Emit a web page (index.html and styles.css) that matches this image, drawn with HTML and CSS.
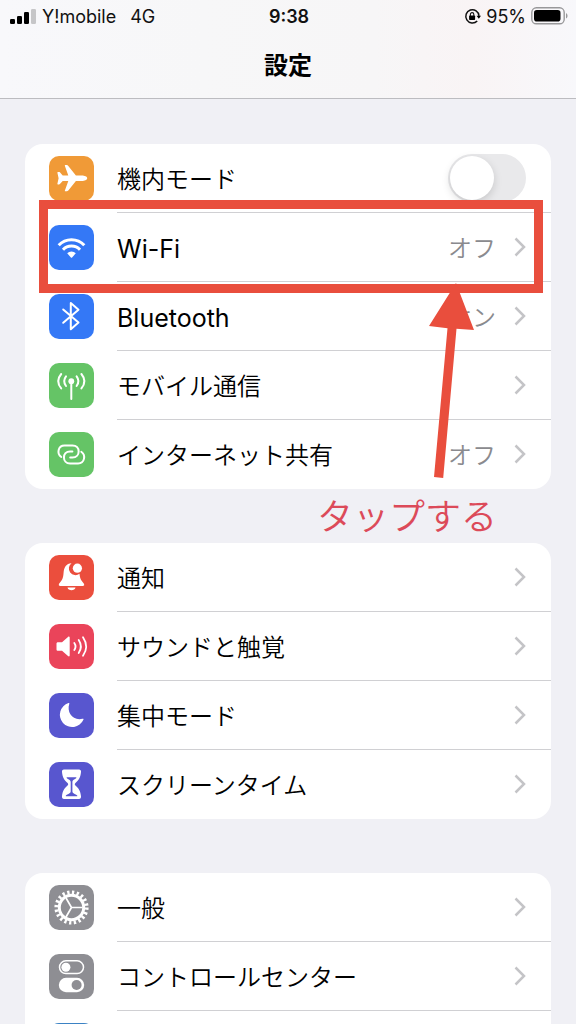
FILE: index.html
```html
<!DOCTYPE html>
<html lang="ja">
<head>
<meta charset="utf-8">
<meta name="viewport" content="width=device-width, initial-scale=1">
<title>設定</title>
<link rel="stylesheet" href="styles.css">
</head>
<body>
<div class="screen">
  <header class="header">
    <div class="status">
      <div class="status-left">
        <svg class="signal" viewBox="0 0 26 17" aria-hidden="true">
          <rect x="0" y="11" width="5" height="5" rx="1.3"/>
          <rect x="7" y="8" width="5" height="8" rx="1.3"/>
          <rect x="14" y="4" width="5" height="12" rx="1.3"/>
          <rect x="21" y="1" width="5" height="15" rx="1.3" fill="#c6c6c8"/>
        </svg>
        <span>Y!mobile</span>
        <span class="network">4G</span>
      </div>
      <time class="clock">9:38</time>
      <div class="status-right">
        <svg class="lock" viewBox="0 0 17 17" aria-hidden="true">
          <path d="M13.2 12.9a6.600 6.600 0 1 1 1.800-5" fill="none" stroke="#111" stroke-width="1.5"/>
          <path d="M12.600 7.800h4.400l-2.200 3z"/>
          <rect x="5.100" y="7.600" width="6" height="4.300" rx=".7"/>
          <path d="M6.400 8V6.300a1.700 1.700 0 0 1 3.400 0V8" fill="none" stroke="#111" stroke-width="1.1"/>
        </svg>
        <span>95%</span>
        <svg class="battery" viewBox="0 0 37 18" aria-hidden="true">
          <rect x=".8" y=".8" width="32.4" height="16" rx="4.6" fill="none" stroke="#98989a" stroke-width="1.4"/>
          <rect x="3" y="3" width="26.5" height="11.6" rx="2.8"/>
          <path d="M35 6.200c2 .6 2 4.600 0 5.200z" fill="#98989a"/>
        </svg>
      </div>
    </div>
    <h1 class="title">設定</h1>
  </header>

  <main class="groups">
    <section class="group">
      <div class="rows">
        <label class="row">
          <svg class="icon orange" viewBox="0 0 45 45" aria-hidden="true">
            <path fill="#fff" d="M38.200 22.200c0 1.700-2.700 2.700-5.300 2.700h-6L19.300 34.500c-.5.600-.9.800-1.500.8h-1.400c-.5 0-.7-.4-.5-.9l3.400-9.500h-5.600l-2.800 3.200c-.3.300-.5.400-.9.400h-1c-.5 0-.7-.3-.6-.8l1.200-5.500-1.200-5.500c-.1-.5.100-.8.600-.8h1c.4 0 .6.100.9.400l2.800 3.200h5.600l-3.400-9.500c-.2-.5 0-.9.500-.9h1.400c.6 0 1 .2 1.500.8l7.600 9.600h6c2.600 0 5.300 1 5.300 2.700z"/>
          </svg>
          <span class="body"><span class="label">機内モード</span><input class="switch" type="checkbox" role="switch"></span>
        </label>
        <a class="row" href="#wifi">
          <svg class="icon blue" viewBox="0 0 45 45" aria-hidden="true">
            <g fill="none" stroke="#fff" stroke-width="3"><path d="M9.700 20.300a17.500 17.500 0 0 1 25.600 0"/><path d="M14 24.700a11.600 11.600 0 0 1 17 0"/></g>
            <path fill="#fff" d="M18.200 28.300a5.800 5.800 0 0 1 8.600 0l-3.700 4.100a.8.800 0 0 1-1.200 0z"/>
          </svg>
          <span class="body"><span class="label latin">Wi-Fi</span><span class="value">オフ</span>
            <svg class="chevron" viewBox="0 0 12 20" aria-hidden="true"><path d="M1.500 1.500 10 10l-8.500 8.500"/></svg></span>
          <span class="frame"></span>
        </a>
        <a class="row" href="#bluetooth">
          <svg class="icon blue" viewBox="0 0 45 45" aria-hidden="true">
            <path fill="none" stroke="#fff" stroke-width="2" stroke-linejoin="round" stroke-linecap="round" d="M14.200 15.500 29.500 28.500l-7.700 6.800V9l7.700 6.700L14.200 28.800"/>
          </svg>
          <span class="body"><span class="label latin">Bluetooth</span><span class="value">オン</span>
            <svg class="chevron" viewBox="0 0 12 20" aria-hidden="true"><path d="M1.500 1.500 10 10l-8.500 8.500"/></svg></span>
        </a>
        <a class="row" href="#mobile">
          <svg class="icon green" viewBox="0 0 45 45" aria-hidden="true">
            <circle cx="22.300" cy="18.200" r="2.900" fill="#fff"/>
            <g fill="none" stroke="#fff" stroke-width="2" stroke-linecap="round"><path d="M22.300 19v17M17 13.400q-3.600 4.800 0 9.600M27.600 13.400q3.600 4.800 0 9.600M12.200 11q-6 7.200 0 14.400M32.400 11q6 7.200 0 14.400"/></g>
          </svg>
          <span class="body"><span class="label">モバイル通信</span>
            <svg class="chevron" viewBox="0 0 12 20" aria-hidden="true"><path d="M1.500 1.500 10 10l-8.500 8.500"/></svg></span>
        </a>
        <a class="row" href="#hotspot">
          <svg class="icon green" viewBox="0 0 45 45" aria-hidden="true">
            <g fill="none" stroke="#fff" stroke-width="2" stroke-linecap="round"><path d="M12.300 25c-4.800-3.400-3.300-11.600 3.200-11.600h8c8.200 0 8.200 12 0 12h-2.300"/><path d="M32.300 19.800c4.800 3.400 3.300 11.600-3.200 11.600h-8c-8.200 0-8.200-12 0-12h2.300"/></g>
          </svg>
          <span class="body"><span class="label">インターネット共有</span><span class="value">オフ</span>
            <svg class="chevron" viewBox="0 0 12 20" aria-hidden="true"><path d="M1.500 1.500 10 10l-8.500 8.500"/></svg></span>
        </a>
      </div>
      <svg class="arrow" viewBox="0 0 46 196" aria-hidden="true"><path d="M27 0 45 47 27.500 45.800 14.200 195 5 194 18.500 45.300 0 43z"/></svg>
      <p class="hint">タップする</p>
    </section>

    <section class="group">
      <div class="rows">
        <a class="row" href="#notifications">
          <svg class="icon red" viewBox="0 0 45 45" aria-hidden="true">
            <path fill="#fff" d="M22.500 8.200c-5.300.2-7.500 4.200-7.900 9.300-.4 6-1.300 7.200-3.800 10.200-1.700 2-1.200 3.300.8 3.300h21.800c2 0 2.500-1.300.8-3.300-2.300-2.800-3.200-4-3.700-8.900a6.100 6.100 0 0 1-8-10.600zM18.500 32.500h8c-.6 3.600-7.400 3.600-8 0z"/>
            <circle cx="28.400" cy="13.200" r="4.600" fill="#fff"/>
          </svg>
          <span class="body"><span class="label">通知</span>
            <svg class="chevron" viewBox="0 0 12 20" aria-hidden="true"><path d="M1.500 1.500 10 10l-8.500 8.500"/></svg></span>
        </a>
        <a class="row" href="#sounds">
          <svg class="icon pink" viewBox="0 0 45 45" aria-hidden="true">
            <path fill="#fff" d="M9 18.200h4l6-5.200c.8-.7 1.700-.4 1.700.6v17.800c0 1-.9 1.300-1.700.6l-6-5.200H9c-1 0-1.500-.5-1.500-1.500v-5.600c0-1 .5-1.500 1.500-1.500z"/>
            <g fill="none" stroke="#fff" stroke-width="1.800" stroke-linecap="round"><path d="M25.300 19q2.400 3.500 0 7M29.700 16q4.400 6.500 0 13M34 13.200q6.300 9.300 0 18.600"/></g>
          </svg>
          <span class="body"><span class="label">サウンドと触覚</span>
            <svg class="chevron" viewBox="0 0 12 20" aria-hidden="true"><path d="M1.500 1.500 10 10l-8.500 8.500"/></svg></span>
        </a>
        <a class="row" href="#focus">
          <svg class="icon indigo" viewBox="0 0 45 45" aria-hidden="true">
            <path fill="#fff" d="M19.500 10c.7-.3 1.100 0 .8.800-2.800 8.500 3.300 17.200 13.200 15 .9-.2 1.300.2.900 1A12.300 12.300 0 1 1 19.500 10z"/>
          </svg>
          <span class="body"><span class="label">集中モード</span>
            <svg class="chevron" viewBox="0 0 12 20" aria-hidden="true"><path d="M1.500 1.500 10 10l-8.500 8.500"/></svg></span>
        </a>
        <a class="row" href="#screentime">
          <svg class="icon indigo" viewBox="0 0 45 45" aria-hidden="true">
            <path fill="#fff" d="M15 7.500h15c1.500 0 2.200 1 2 2.600-.5 5.500-2.400 8.200-5.300 10.600-1.200 1-1.200 2 0 3 2.900 2.400 4.800 5.100 5.300 10.600.2 1.600-.5 2.600-2 2.600H15c-1.500 0-2.200-1-2-2.600.5-5.500 2.400-8.200 5.300-10.600 1.200-1 1.200-2 0-3-2.900-2.400-4.800-5.100-5.300-10.600-.2-1.600.5-2.600 2-2.600z"/>
            <path fill="#5856cf" d="M18 15.300h9c.5 0 .6.300.3.700-.8 1.300-3.900 1.500-3.900 4v9.600c0 2 3.400 2.600 4.800 4 .3.400.1.700-.3.700H17.200c-.4 0-.6-.3-.3-.7 1.400-1.400 4.800-2 4.800-4V20c0-2.500-3.200-2.700-4-4-.3-.4-.2-.7.300-.7z"/>
          </svg>
          <span class="body"><span class="label">スクリーンタイム</span>
            <svg class="chevron" viewBox="0 0 12 20" aria-hidden="true"><path d="M1.500 1.500 10 10l-8.500 8.500"/></svg></span>
        </a>
      </div>
    </section>

    <section class="group">
      <div class="rows">
        <a class="row" href="#general">
          <svg class="icon gray" viewBox="0 0 45 45" aria-hidden="true">
            <g fill="none" stroke="#fff"><circle cx="22.500" cy="22.500" r="15.200" stroke-width="3.800" stroke-dasharray="2.300 2.475"/><circle cx="22.500" cy="22.500" r="12.200" stroke-width="3"/><path stroke-width="1.700" d="M22.500 22.500h11M22.500 22.500 17 13M22.500 22.500 17 32"/></g>
          </svg>
          <span class="body"><span class="label">一般</span>
            <svg class="chevron" viewBox="0 0 12 20" aria-hidden="true"><path d="M1.500 1.500 10 10l-8.500 8.500"/></svg></span>
        </a>
        <a class="row" href="#control">
          <svg class="icon gray" viewBox="0 0 45 45" aria-hidden="true">
            <rect x="10.500" y="6.800" width="24" height="12.800" rx="6.400" fill="none" stroke="#fff" stroke-width="1.500"/><circle cx="16.900" cy="13.200" r="4.500" fill="#fff"/>
            <rect x="9.800" y="23.800" width="25.400" height="14.400" rx="7.200" fill="#fff"/><circle cx="27.600" cy="31" r="5" fill="#8e8e93"/>
          </svg>
          <span class="body"><span class="label">コントロールセンター</span>
            <svg class="chevron" viewBox="0 0 12 20" aria-hidden="true"><path d="M1.500 1.500 10 10l-8.500 8.500"/></svg></span>
        </a>
        <div class="row">
          <svg class="icon sky" viewBox="0 0 45 45" aria-hidden="true"></svg>
          <span class="body"></span>
        </div>
      </div>
    </section>
  </main>
</div>
</body>
</html>
```
FILE: styles.css
```css
* {
  box-sizing: border-box;
}

body {
  margin: 0;
  background: #f0f0f5;
  color: #000;
  font-family: Inter, "Noto Sans CJK JP", sans-serif;
}

.screen {
  height: 100vh;
  overflow: hidden;
}

.header {
  height: 99px;
  border-bottom: 1px solid #bcbcc0;
  background: linear-gradient(90deg, #f8f8fb, #f7f7f8 35%, #f7f6f7 65%, #f9f4f5 82%, #f8f8fb);
}

.status {
  display: grid;
  grid-template-columns: 1fr auto 1fr;
  align-items: center;
  height: 32px;
  padding: 0 8px 0 10px;
  font-size: 18px;
  color: #111;
}

.status-left,
.status-right {
  display: flex;
  align-items: center;
}

.status-left {
  gap: 6px;
}

.status-right {
  justify-content: flex-end;
  gap: 5px;
}

.network {
  margin-left: 8px;
}

.clock {
  font-weight: 600;
}

.signal {
  width: 26px;
  height: 17px;
}

.lock {
  width: 17px;
  height: 17px;
}

.battery {
  width: 37px;
  height: 18px;
}

.title {
  margin: 17px 0 0;
  font-size: 24px;
  line-height: 34px;
  font-weight: 700;
  text-align: center;
}

.groups {
  display: flex;
  flex-direction: column;
  gap: 54px;
  padding: 45px 25px 0;
}

.group {
  position: relative;
  border-radius: 18px;
  background: #fff;
}

.row {
  position: relative;
  display: flex;
  align-items: center;
  gap: 23px;
  height: 69px;
  padding-left: 24px;
  color: inherit;
  text-decoration: none;
}

.icon {
  flex: none;
  width: 45px;
  height: 45px;
  border-radius: 10px;
}

.orange { background: #f09a37; }
.blue { background: #3478f6; }
.green { background: #65c466; }
.red { background: #eb4e3d; }
.pink { background: #ea445a; }
.indigo { background: #5856cf; }
.gray { background: #8e8e93; }
.sky { background: #3b82c4; }

.body {
  flex: 1;
  display: flex;
  align-items: center;
  height: 100%;
  padding-right: 25px;
  border-bottom: 1px solid #d0d0d3;
  font-size: 24px;
  line-height: 36px;
}

.row:last-child .body {
  border-bottom-color: transparent;
}

.label,
.value {
  padding-top: 3px;
}

.label {
  flex: 1;
  font-weight: 350;
}

.latin {
  font-size: 25px;
  font-weight: 400;
}

.value {
  margin-right: 18px;
  color: #8a8a8e;
  font-weight: 350;
}

.chevron {
  width: 12px;
  height: 20px;
  fill: none;
  stroke: #c4c4c7;
  stroke-width: 2.5;
}

.switch {
  appearance: none;
  width: 78px;
  height: 48px;
  margin: 0;
  padding: 2px;
  border-radius: 24px;
  background: #e9e9eb;
}

.switch::before {
  content: "";
  display: block;
  width: 44px;
  height: 44px;
  border-radius: 50%;
  background: #fff;
  box-shadow: 0 3px 8px rgba(0, 0, 0, 0.15);
}

/* Callout marks drawn over the list */
.frame {
  position: absolute;
  z-index: 1;
  inset: -13px 8px -11px 14px;
  border: 9px solid #e94e3d;
}

.arrow {
  position: absolute;
  z-index: 2;
  top: 139px;
  right: 76px;
  width: 46px;
  height: 196px;
  fill: #e94e3d;
}

.hint {
  position: absolute;
  top: 347px;
  right: 54px;
  margin: 0;
  color: #dc4a59;
  font-size: 36px;
  line-height: 52px;
  font-weight: 350;
}
```
